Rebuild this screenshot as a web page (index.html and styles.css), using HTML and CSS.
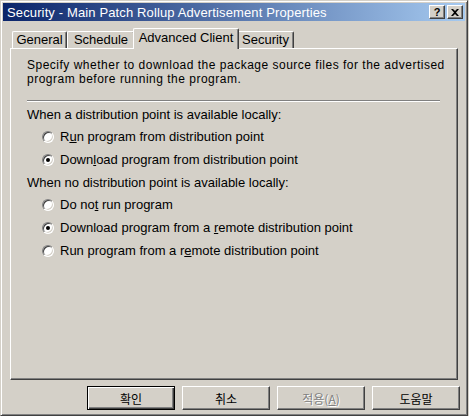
FILE: index.html
```html
<!DOCTYPE html>
<html>
<head>
<meta charset="utf-8">
<link rel="stylesheet" href="styles.css">
</head>
<body>
<div class="window">
  <div class="titlebar">
    <span class="title">Security - Main Patch Rollup Advertisement Properties</span>
    <div class="tbtns">
      <span class="tbtn help">?</span>
      <span class="tbtn close">
        <svg width="8" height="7" viewBox="0 0 8 7"><path d="M0 0h2l2 2 2-2h2L5 3.5 8 7H6L4 5 2 7H0l3-3.5z" fill="#000"/></svg>
      </span>
    </div>
  </div>
  <div class="body">
    <div class="tabs">
      <span class="tab t-general">General</span>
      <span class="tab t-schedule">Schedule</span>
      <span class="tab active">Advanced Client</span>
      <span class="tab t-security">Security</span>
    </div>
    <div class="panel">
      <p class="intro">Specify whether to download the package source files for the advertised<br>program before running the program.</p>
      <div class="sep"></div>
      <div class="group-label">When a distribution point is available locally:</div>
      <div class="opt"><span class="radio"></span><span class="lbl">R<u>u</u>n program from distribution point</span></div>
      <div class="opt"><span class="radio on"></span><span class="lbl">Down<u>l</u>oad program from distribution point</span></div>
      <div class="group-label">When no distribution point is available locally:</div>
      <div class="opt"><span class="radio"></span><span class="lbl">Do no<u>t</u> run program</span></div>
      <div class="opt"><span class="radio on"></span><span class="lbl">Download program from a <u>r</u>emote distribution point</span></div>
      <div class="opt"><span class="radio"></span><span class="lbl">Run program from a r<u>e</u>mote distribution point</span></div>
    </div>
    <div class="buttons">
      <span class="btn default"><span>확인</span></span>
      <span class="btn"><span>취소</span></span>
      <span class="btn disabled"><span>적용(<u>A</u>)</span></span>
      <span class="btn"><span>도움말</span></span>
    </div>
  </div>
</div>
</body>
</html>
```
FILE: styles.css
```css
html, body {
  margin: 0;
  padding: 0;
  background: #d4d0c8;
}
body {
  width: 469px;
  height: 416px;
  overflow: hidden;
  font-family: "Liberation Sans", Arial, "Noto Sans CJK KR", sans-serif;
  font-size: 13px;
  color: #000;
}
.window {
  box-sizing: border-box;
  width: 468px;
  height: 416px;
  background: #d4d0c8;
  border-top: 1px solid #d4d0c8;
  border-left: 1px solid #d4d0c8;
  border-right: 1px solid #404040;
  border-bottom: 1px solid #404040;
  box-shadow: inset 1px 1px #fff, inset -1px -1px #808080;
  padding: 2px;
  display: flex;
  flex-direction: column;
}
.titlebar {
  height: 18px;
  background: linear-gradient(to right, #0a246a, #a6caf0);
  display: flex;
  align-items: center;
  justify-content: space-between;
  padding: 0 2px 0 4px;
  flex: none;
}
.title {
  color: #fff;
  font-size: 13px;
  letter-spacing: 0.13px;
  white-space: nowrap;
}
.tbtns {
  display: flex;
  gap: 2px;
}
.tbtn {
  box-sizing: border-box;
  width: 16px;
  height: 14px;
  background: #d4d0c8;
  border-top: 1px solid #fff;
  border-left: 1px solid #fff;
  border-right: 1px solid #404040;
  border-bottom: 1px solid #404040;
  box-shadow: inset -1px -1px #808080;
  display: flex;
  align-items: center;
  justify-content: center;
  font-weight: bold;
  font-size: 11px;
  line-height: 1;
}
.body {
  flex: 1;
  display: flex;
  flex-direction: column;
  padding: 7px 7px 0 7px;
}
.tabs {
  display: flex;
  align-items: flex-end;
  height: 20px;
  padding-left: 2px;
  position: relative;
  z-index: 1;
}
.tab {
  box-sizing: border-box;
  height: 17px;
  padding-bottom: 2px;
  border-top: 1px solid #fff;
  border-left: 1px solid #fff;
  border-right: 1px solid #404040;
  box-shadow: inset -1px 0 #808080;
  border-radius: 2px 2px 0 0;
  display: flex;
  align-items: center;
  justify-content: center;
  white-space: nowrap;
  background: #d4d0c8;
}
.t-general { width: 55px; }
.t-schedule { width: 68px; }
.t-security { width: 57px; }
.tab.active {
  width: 106px;
  height: 21px;
  margin: 0 -2px -1px -2px;
  padding-bottom: 4px;
  position: relative;
  z-index: 2;
}
.panel {
  box-sizing: border-box;
  width: 448px;
  height: 332px;
  border-top: 1px solid #fff;
  border-left: 1px solid #fff;
  border-right: 1px solid #404040;
  border-bottom: 1px solid #404040;
  box-shadow: inset -1px -1px #808080;
  padding: 9px 6px 0 16px;
  flex: none;
}
.intro {
  margin: 0;
  font-size: 12px;
  letter-spacing: 0.5px;
  line-height: 14px;
  white-space: nowrap;
}
.sep {
  height: 1px;
  background: #808080;
  border-bottom: 1px solid #fff;
  margin: 14px 11px 0 0;
}
.group-label {
  margin-top: 6px;
  height: 14px;
  line-height: 14px;
}
.opt + .group-label {
  margin-top: 9px;
}
.opt {
  display: flex;
  align-items: center;
  height: 14px;
  line-height: 14px;
  margin-top: 9px;
  padding-left: 15px;
  white-space: nowrap;
}
.group-label + .opt { margin-top: 8px; }
.radio {
  box-sizing: border-box;
  width: 12px;
  height: 12px;
  border-radius: 50%;
  border: 1px solid;
  border-color: #808080 #fff #fff #808080;
  box-shadow: inset 1px 1px #404040, inset -1px -1px #d4d0c8;
  background: #fff;
  margin-right: 6px;
  display: flex;
  align-items: center;
  justify-content: center;
  flex: none;
}
.radio.on::after {
  content: "";
  width: 4px;
  height: 4px;
  border-radius: 50%;
  background: #000;
}
u {
  text-decoration: underline;
  text-underline-offset: 1px;
}
.buttons {
  display: flex;
  justify-content: flex-end;
  gap: 7px;
  margin-top: 6px;
  margin-right: -2px;
}
.btn {
  box-sizing: border-box;
  width: 88px;
  height: 24px;
  border-top: 1px solid #fff;
  border-left: 1px solid #fff;
  border-right: 1px solid #404040;
  border-bottom: 1px solid #404040;
  box-shadow: inset -1px -1px #808080;
  display: flex;
  align-items: center;
  justify-content: center;
  font-family: "Noto Sans CJK KR", sans-serif;
  font-size: 12px;
}
.btn.default {
  border: 1px solid #000;
  box-shadow: inset 1px 1px #fff, inset -1px -1px #404040, inset -2px -2px #808080;
}
.btn.disabled {
  color: #808080;
  text-shadow: 1px 1px #fff;
}
```
